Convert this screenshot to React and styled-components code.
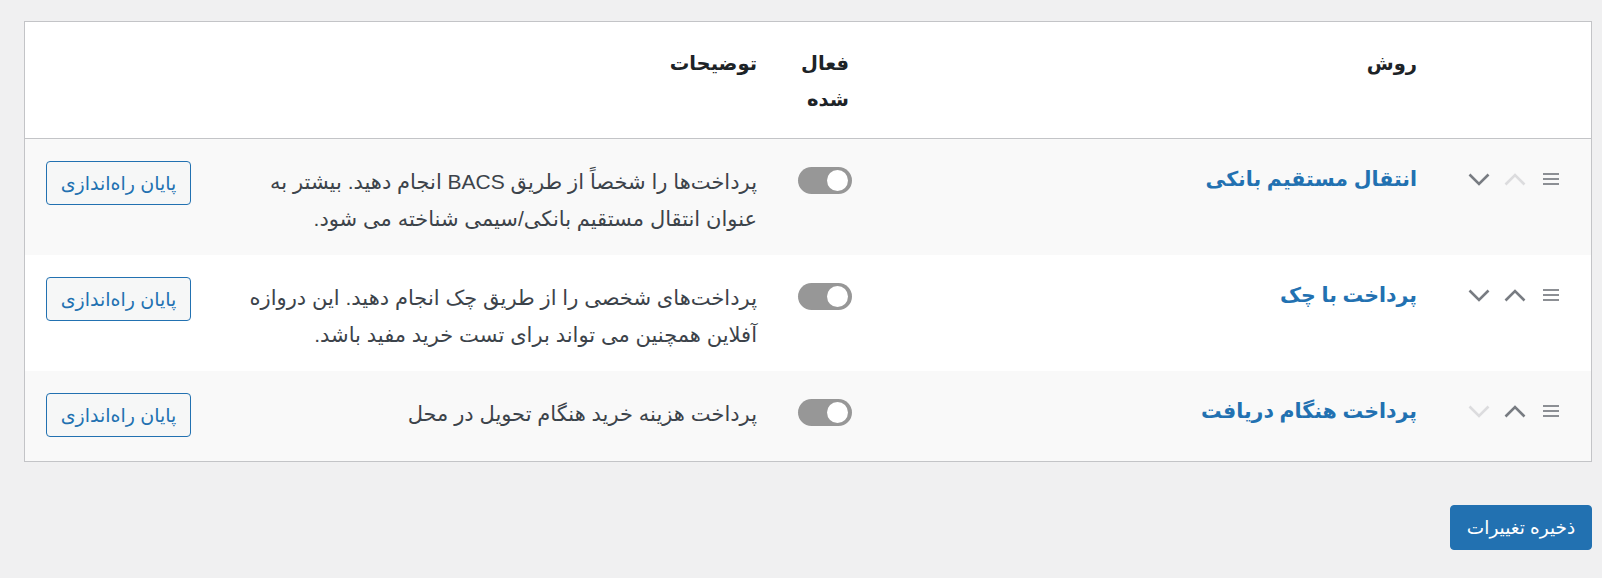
import React from "react";
import styled, { createGlobalStyle } from "styled-components";

const GlobalStyle = createGlobalStyle`
	html, body {
		margin: 0;
		padding: 0;
		background: #f0f0f1;
	}
	body {
		font-family: "Liberation Sans", "DejaVu Sans", sans-serif;
	}
`;

const methods = [
	{
		id: "bacs",
		name: "انتقال مستقیم بانکی",
		lines: [
			"پرداخت‌ها را شخصاً از طریق BACS انجام دهید. بیشتر به",
			"عنوان انتقال مستقیم بانکی/سیمی شناخته می شود.",
		],
		canUp: false,
		canDown: true,
	},
	{
		id: "cheque",
		name: "پرداخت با چک",
		lines: [
			"پرداخت‌های شخصی را از طریق چک انجام دهید. این دروازه",
			"آفلاین همچنین می تواند برای تست خرید مفید باشد.",
		],
		canUp: true,
		canDown: true,
	},
	{
		id: "cod",
		name: "پرداخت هنگام دریافت",
		lines: ["پرداخت هزینه خرید هنگام تحویل در محل"],
		canUp: true,
		canDown: false,
	},
];

const Page = styled.div`
	direction: rtl;
	min-height: 100vh;
	box-sizing: border-box;
	padding: 21px 10px 0 24px;
	background: #f0f0f1;
`;

const Table = styled.div`
	background: #fff;
	border: 1px solid #c3c4c7;
`;

const Grid = styled.div`
	display: grid;
	grid-template-columns: 154px 568px 92px 1fr 220px;
	background: ${(props) => (props.$striped ? "#f9f9f9" : "#fff")};
	border-bottom: ${(props) => (props.$head ? "1px solid #c3c4c7" : "none")};
`;

const Cell = styled.div`
	padding: 22px 20px 18px 0;
	min-height: 36px;
`;

const HeadCell = styled.div`
	padding: 23px 20px 21px 0;
	font-size: 19.5px;
	font-weight: 700;
	line-height: 36px;
	color: #1d2327;
`;

const SortCell = styled.div`
	padding: 22px 32px 18px 0;
	display: flex;
	align-items: flex-start;
	height: 36px;
`;

const SortIcons = styled.div`
	display: flex;
	align-items: center;
	height: 36px;
`;

const Handle = styled.svg`
	width: 16px;
	height: 12px;
	margin-left: 17px;
	fill: #8c8f94;
`;

const Chevron = styled.svg`
	width: 22px;
	height: 13px;
	margin-left: ${(props) => (props.$gap ? "14px" : "0")};
	fill: none;
	stroke: ${(props) => (props.$active ? "#787c82" : "#dcdcde")};
	stroke-width: 2.6;
`;

const NameLink = styled.a`
	display: block;
	font-size: 20.5px;
	font-weight: 700;
	line-height: 36px;
	color: #2271b1;
	text-decoration: none;
`;

const ToggleWrap = styled.div`
	padding-top: 6px;
	margin-right: -3px;
`;

const Toggle = styled.span`
	position: relative;
	display: block;
	width: 54px;
	height: 27px;
	border-radius: 14px;
	background: #979797;

	&::after {
		content: "";
		position: absolute;
		top: 3px;
		right: 4px;
		width: 21px;
		height: 21px;
		border-radius: 50%;
		background: #fff;
	}
`;

const Description = styled.p`
	margin: 0;
	padding-top: 2px;
	font-size: 21px;
	line-height: 37px;
	color: #3c434a;
	white-space: nowrap;
`;

const ActionCell = styled.div`
	padding: 22px 0 24px 21px;
	display: flex;
	justify-content: flex-end;
	align-items: flex-start;
`;

const SetupButton = styled.button`
	height: 44px;
	width: 145px;
	padding: 0 8px;
	border: 1px solid #2271b1;
	border-radius: 4px;
	background: #f6f7f7;
	color: #2271b1;
	font-family: inherit;
	font-size: 19px;
	cursor: pointer;
`;

const Footer = styled.div`
	display: flex;
	margin-top: 43px;
	margin-left: -1px;
`;

const SaveButton = styled.button`
	height: 45px;
	width: 142px;
	border: 1px solid #2271b1;
	border-radius: 4px;
	background: #2271b1;
	color: #fff;
	font-family: inherit;
	font-size: 18.5px;
	cursor: pointer;
`;

function SortControls({ canUp, canDown }) {
	return (
		<SortIcons>
			<Handle viewBox="0 0 16 12">
				<rect x="0" y="0" width="16" height="2" />
				<rect x="0" y="5" width="16" height="2" />
				<rect x="0" y="10" width="16" height="2" />
			</Handle>
			<Chevron viewBox="0 0 22 13" $active={canUp} $gap>
				<polyline points="1.5,11.5 11,2 20.5,11.5" />
			</Chevron>
			<Chevron viewBox="0 0 22 13" $active={canDown}>
				<polyline points="1.5,1.5 11,11 20.5,1.5" />
			</Chevron>
		</SortIcons>
	);
}

export default function App() {
	return (
		<Page>
			<GlobalStyle />
			<Table>
				<Grid $head>
					<HeadCell />
					<HeadCell>روش</HeadCell>
					<HeadCell>
						فعال
						<br />
						شده
					</HeadCell>
					<HeadCell>توضیحات</HeadCell>
					<HeadCell />
				</Grid>
				{methods.map((item, i) => (
					<Grid key={item.id} $striped={i % 2 === 0}>
						<SortCell>
							<SortControls canUp={item.canUp} canDown={item.canDown} />
						</SortCell>
						<Cell>
							<NameLink href="#">{item.name}</NameLink>
						</Cell>
						<Cell>
							<ToggleWrap>
								<Toggle />
							</ToggleWrap>
						</Cell>
						<Cell>
							<Description>
								{item.lines.map((line, j) => (
									<React.Fragment key={j}>
										{j > 0 && <br />}
										{line}
									</React.Fragment>
								))}
							</Description>
						</Cell>
						<ActionCell>
							<SetupButton>پایان راه‌اندازی</SetupButton>
						</ActionCell>
					</Grid>
				))}
			</Table>
			<Footer>
				<SaveButton>ذخیره تغییرات</SaveButton>
			</Footer>
		</Page>
	);
}
